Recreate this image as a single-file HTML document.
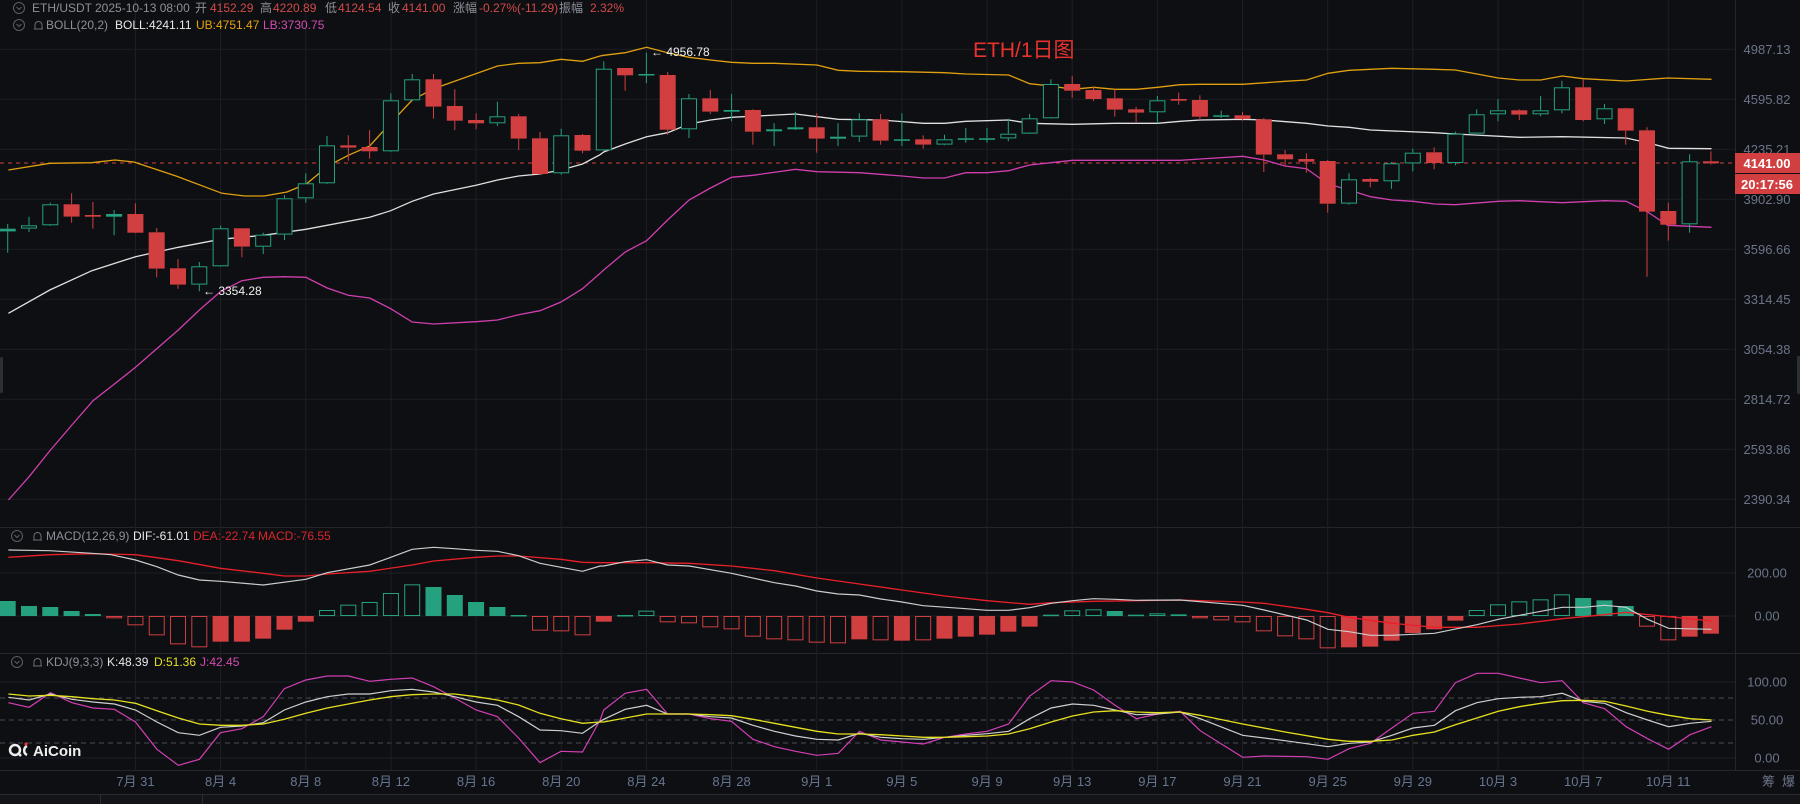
<!DOCTYPE html>
<html><head><meta charset="utf-8">
<style>
html,body{margin:0;padding:0;background:#0e0f12;width:1800px;height:804px;overflow:hidden;}
svg{display:block;font-family:"Liberation Sans","Noto Sans CJK SC",sans-serif;}
</style></head>
<body>
<svg id="c" width="1800" height="804" xmlns="http://www.w3.org/2000/svg">
<rect width="1800" height="804" fill="#0e0f12"/>
<g id="grid"></g>
<g id="ind"></g>
<g id="cand"></g>
<!-- headers -->
<g font-size="12">
  <circle cx="19" cy="8" r="5.5" fill="none" stroke="#5a5e68" stroke-width="1"/>
  <path d="M16.5 7 L19 9.5 L21.5 7" fill="none" stroke="#5a5e68" stroke-width="1"/>
  <text x="32" y="12" fill="#8c909a">ETH/USDT</text>
  <text x="95" y="12" fill="#8c909a">2025-10-13 08:00</text>
  <text x="195" y="12" fill="#8c909a">开</text><text x="210" y="12" fill="#d24a4a">4152.29</text>
  <text x="260" y="12" fill="#8c909a">高</text><text x="273" y="12" fill="#d24a4a">4220.89</text>
  <text x="325" y="12" fill="#8c909a">低</text><text x="338" y="12" fill="#d24a4a">4124.54</text>
  <text x="388" y="12" fill="#8c909a">收</text><text x="402" y="12" fill="#d24a4a">4141.00</text>
  <text x="453" y="12" fill="#8c909a">涨幅</text><text x="479" y="12" fill="#d24a4a">-0.27%(-11.29)</text>
  <text x="559" y="12" fill="#8c909a">振幅</text><text x="590" y="12" fill="#d24a4a">2.32%</text>

  <circle cx="19" cy="25" r="5.5" fill="none" stroke="#5a5e68" stroke-width="1"/>
  <path d="M16.5 24 L19 26.5 L21.5 24" fill="none" stroke="#5a5e68" stroke-width="1"/>
  <path d="M34 29 h9 M35 29 v-4 a3.5 3.5 0 0 1 7 0 v4" fill="none" stroke="#6a6e78" stroke-width="1"/>
  <text x="46" y="29" fill="#8c909a">BOLL(20,2)</text>
  <text x="115" y="29" fill="#e8e8e8">BOLL:4241.11</text>
  <text x="196" y="29" fill="#e6a30e">UB:4751.47</text>
  <text x="263" y="29" fill="#d24cb0">LB:3730.75</text>

  <circle cx="17" cy="536" r="5.5" fill="none" stroke="#5a5e68" stroke-width="1"/>
  <path d="M14.5 535 L17 537.5 L19.5 535" fill="none" stroke="#5a5e68" stroke-width="1"/>
  <path d="M33 540 h9 M34 540 v-4 a3.5 3.5 0 0 1 7 0 v4" fill="none" stroke="#6a6e78" stroke-width="1"/>
  <text x="46" y="540" fill="#8c909a">MACD(12,26,9)</text>
  <text x="133" y="540" fill="#e8e8e8">DIF:-61.01</text>
  <text x="193" y="540" fill="#d9262c">DEA:-22.74</text>
  <text x="258" y="540" fill="#d9262c">MACD:-76.55</text>

  <circle cx="17" cy="662" r="5.5" fill="none" stroke="#5a5e68" stroke-width="1"/>
  <path d="M14.5 661 L17 663.5 L19.5 661" fill="none" stroke="#5a5e68" stroke-width="1"/>
  <path d="M33 666 h9 M34 666 v-4 a3.5 3.5 0 0 1 7 0 v4" fill="none" stroke="#6a6e78" stroke-width="1"/>
  <text x="46" y="666" fill="#8c909a">KDJ(9,3,3)</text>
  <text x="107" y="666" fill="#e8e8e8">K:48.39</text>
  <text x="154" y="666" fill="#e6e020">D:51.36</text>
  <text x="200" y="666" fill="#d24cb0">J:42.45</text>
</g>
<text x="973" y="57" font-size="21" fill="#e8322e">ETH/1日图</text>
<text x="203" y="295" font-size="12" fill="#f0f0f0">← 3354.28</text>
<text x="651" y="56" font-size="12" fill="#f0f0f0">← 4956.78</text>
<!-- AiCoin logo -->
<g>
  <circle cx="15" cy="750" r="5" fill="none" stroke="#eee" stroke-width="2.5"/>
  <path d="M18 753 l3 3" stroke="#eee" stroke-width="2.5"/>
  <path d="M27 746 a5 5 0 0 0 0 9" fill="none" stroke="#eee" stroke-width="2.5"/>
  <circle cx="26" cy="744" r="1.6" fill="#e33"/>
  <text x="33" y="756" font-size="15" font-weight="bold" fill="#eee">AiCoin</text>
</g>
<!-- price tags -->
<rect x="1735" y="153" width="65" height="20" fill="#d13f41"/>
<text x="1767" y="168" font-size="13" font-weight="bold" fill="#fff" text-anchor="middle">4141.00</text>
<rect x="1735" y="174" width="65" height="20" fill="#d13f41"/>
<text x="1767" y="189" font-size="13" font-weight="bold" fill="#fff" text-anchor="middle">20:17:56</text>
<rect x="0" y="357" width="3" height="36" rx="1" fill="#2c2f36"/>
<rect x="1797" y="356" width="3" height="38" rx="1" fill="#2c2f36"/>
<!-- bottom strip -->
<rect x="0" y="794" width="1800" height="10" fill="#131418"/>
<line x1="0" y1="794.5" x2="1800" y2="794.5" stroke="#2a2c32"/>
<line x1="100.5" y1="795" x2="100.5" y2="804" stroke="#2a2c32"/>
<line x1="202.5" y1="795" x2="202.5" y2="804" stroke="#2a2c32"/>
<text x="1762" y="786" font-size="13" fill="#6b7488">筹</text>
<text x="1782" y="786" font-size="13" fill="#6b7488">爆</text>
</svg>
<script>
(function(){
var S=2.613, NS="http://www.w3.org/2000/svg";
var grid=document.getElementById('grid'), ind=document.getElementById('ind'), cand=document.getElementById('cand');
var h='';
function X(i){return 7.7+21.29*i;}
// horizontal grid main
var pl=[["4987.13",49.3],["4595.82",99.3],["4235.21",149.3],["3902.90",199.3],["3596.66",249.3],["3314.45",299.3],["3054.38",349.3],["2814.72",399.3],["2593.86",449.3],["2390.34",499.3]];
pl.forEach(function(p){h+='<line x1="0" y1="'+p[1]+'" x2="1735" y2="'+p[1]+'" stroke="#1d1f25"/>';
 h+='<text x="1767" y="'+(p[1]+4.5)+'" font-size="13" fill="#6b7488" text-anchor="middle">'+p[0]+'</text>';});
// panel separators
[527,653,770].forEach(function(y){h+='<line x1="0" y1="'+(y+.5)+'" x2="1800" y2="'+(y+.5)+'" stroke="#24262c"/>';});
[573,616,682,758].forEach(function(y){h+='<line x1="0" y1="'+y+'" x2="1735" y2="'+y+'" stroke="#1d1f25"/>';});
[["200.00",573],["0.00",616],["100.00",682],["50.00",720],["0.00",758]].forEach(function(p){
 h+='<text x="1767" y="'+(p[1]+4.5)+'" font-size="13" fill="#6b7488" text-anchor="middle">'+p[0]+'</text>';});
[698,720,743].forEach(function(y){h+='<line x1="0" y1="'+y+'" x2="1735" y2="'+y+'" stroke="#4a4d55" stroke-dasharray="5,4"/>';});
// vertical grid + time labels
var tl=["7月 31","8月 4","8月 8","8月 12","8月 16","8月 20","8月 24","8月 28","9月 1","9月 5","9月 9","9月 13","9月 17","9月 21","9月 25","9月 29","10月 3","10月 7","10月 11"];
for(var k=0;k<tl.length;k++){var x=X(6+4*k);
 h+='<line x1="'+x+'" y1="0" x2="'+x+'" y2="770" stroke="#1d1f25"/>';
 h+='<text x="'+x+'" y="786" font-size="13" fill="#667591" text-anchor="middle">'+tl[k]+'</text>';}
h+='<line x1="1735.5" y1="0" x2="1735.5" y2="770" stroke="#24262c"/>';
// dashed price line
h+='<line x1="0" y1="163" x2="1735" y2="163" stroke="#d13f41" stroke-dasharray="4,4"/>';
grid.innerHTML=h;

function seg(x0,y0,a,out){for(var k=0;k<a.length;k+=2){var x=x0+a[k]/S,y=y0+a[k+1]/3;
 if(out.length&&x<=out[out.length-1][0]+0.5)continue;out.push([x,y]);}return out;}
function line(pts,c,w){return '<polyline fill="none" stroke="'+c+'" stroke-width="'+(w||1.2)+'" points="'+pts.map(function(p){return p[0].toFixed(1)+','+p[1].toFixed(1);}).join(' ')+'"/>';}
var g='';
// BOLL
var up=[];seg(0,40,[22,390,130,370,240,368,300,360,350,366,460,408,580,460,640,468,690,468,750,456,800,432,860,376,910,346,966,318,1020,250,1077,180,1133,146,1188,124,1300,78,1355,70,1411,68,1466,58,1522,64,1568,48],up);
seg(580,40,[0,64,62,46,118,38,174,22,229,38,285,52,341,60,396,67,452,70,508,70,619,75,675,91,730,94,841,95,953,98,1008,102,1120,105,1175,131,1231,138,1287,148,1342,142,1398,148,1454,148,1509,142,1568,134],up);
seg(1160,40,[0,142,105,133,216,133,327,124,383,120,439,100,494,91,606,85,717,88,772,90,828,102,884,114,939,120,995,120,1051,108,1106,116,1218,123,1327,114,1441,118],up);
var mid=[];seg(0,40,[22,820,130,750,240,692,354,650,466,622,576,598,688,586,799,568,966,532,1021,512,1077,484,1133,462,1244,436,1300,420,1355,408,1411,402,1466,390,1522,372,1568,344],mid);
seg(580,40,[0,372,62,336,118,312,174,290,229,278,285,252,341,240,396,232,563,222,675,238,786,240,897,250,953,250,1008,244,1120,240,1175,250,1287,253,1398,250,1509,250,1568,244],mid);
seg(1160,40,[0,250,105,240,216,238,272,240,383,250,439,258,494,262,550,270,717,278,772,282,939,292,1051,290,1218,294,1274,308,1329,325,1441,326],mid);
var lo=[];seg(0,40,[22,1380,76,1310,132,1230,188,1155,243,1082,299,1032,354,982,466,870,521,810,576,755,632,722,688,712,743,710,799,712,855,744,910,766,966,774,1021,806,1077,846,1133,852,1244,845,1300,840,1355,824,1411,812,1466,786,1522,746,1568,700],lo);
seg(580,40,[0,746,62,690,118,636,174,602,229,540,285,480,341,444,396,412,452,406,563,388,619,395,730,398,841,408,897,414,953,414,1008,398,1064,398,1120,392,1175,375,1231,368,1287,361,1568,361],lo);
seg(1160,40,[0,360,105,357,216,349,272,360,327,378,383,386,439,432,494,450,550,470,606,480,661,484,717,492,772,494,884,484,939,482,1051,488,1162,482,1218,484,1274,516,1327,556,1441,562],lo);
g+=line(up,'#e0a010',1.3)+line(mid,'#e0e0e0',1.3)+line(lo,'#d03fb0',1.3);

// MACD hist
var hz=[[243,0],[258,0],[261,0],[273,0],[282,0],[295,1],[316,1],[346,1],[373,1],[382,1],[365,0],[365,0],[356,0],[329,0],[305,0],[270,1],[254,1],[246,1],[219,1],[193,1],[201,0],[225,0],[246,0],[261,0],[285,0],[332,1],[334,1],[346,1],[305,0],[285,0],[272,1],[307,1],[310,1],[322,1],[328,1],[350,1],[358,1],[361,1],[368,1],[370,1],[358,0],[361,1],[362,0],[361,1],[356,0],[350,0],[344,0],[335,0],[320,0],[284,0],[271,1],[268,1],[273,0],[284,0],[280,1],[283,0],[295,1],[301,1],[307,1],[334,1],[349,1],[358,1],[385,1],[382,0],[380,0],[362,0],[339,0],[328,0],[302,0],[270,1],[253,1],[244,1],[238,1],[223,1],[234,0],[241,0],[258,0],[320,1],[361,1],[350,0],[341,0]];
var zero=616;
hz.forEach(function(b,i){var y=520+b[0]/3,x=X(i)-8,c=b[0]<288?'#26a17f':'#d13f41';
 var t=Math.min(y,zero),hh=Math.max(Math.abs(y-zero),1.5);
 if(b[1]&&hh>2)g+='<rect x="'+(x+.5)+'" y="'+(t+.5)+'" width="15" height="'+(hh-1)+'" fill="none" stroke="'+c+'" stroke-width="1"/>';
 else g+='<rect x="'+x+'" y="'+t+'" width="16" height="'+hh+'" fill="'+c+'"/>';});
var dif=[];seg(0,520,[22,90,130,92,240,100,290,104,354,120,410,140,466,165,521,180,576,184,688,195,799,178,855,158,966,135,1021,112,1077,88,1133,82,1188,86,1244,91,1300,94,1355,107,1411,130,1466,142,1522,154,1568,138],dif);
seg(580,520,[0,154,62,138,118,125,174,119,229,135,285,138,396,160,508,188,563,198,619,213,675,222,730,225,786,237,841,246,897,257,1008,266,1064,271,1120,271,1175,263,1231,250,1287,242,1342,236,1398,238,1454,241,1568,240],dif);
seg(1160,520,[0,240,50,240,216,256,272,270,383,300,439,328,494,335,550,346,606,346,717,340,828,314,884,298,939,286,1051,262,1106,262,1162,256,1218,262,1274,298,1329,325,1441,328],dif);
var dea=[];seg(0,520,[22,112,130,104,240,101,354,104,466,122,576,145,688,160,743,168,799,168,855,162,966,154,1077,135,1133,123,1244,112,1300,108,1355,108,1466,118,1522,127,1568,128],dea);
seg(580,520,[0,127,174,128,285,130,396,138,508,152,619,174,730,192,841,210,953,228,1064,242,1175,253,1231,248,1342,244,1454,242,1568,240],dea);
seg(1160,520,[0,240,216,246,272,250,383,268,439,278,494,292,606,310,717,322,828,322,939,312,1051,296,1162,284,1218,277,1329,290,1441,303],dea);
g+=line(dea,'#e8202a',1.3)+line(dif,'#cccccc',1.2);
// KDJ
var K=[];seg(0,520,[22,532,76,540,132,522,188,538,243,546,299,552,354,570,410,606,466,638,521,646,576,622,632,618,688,608,743,570,799,546,855,530,910,522,966,522,1021,512,1077,508,1133,516,1188,530,1244,546,1300,556,1355,590,1411,630,1466,632,1522,640,1568,604],K);
seg(580,520,[0,640,62,598,118,568,174,556,229,582,285,582,341,590,396,594,452,616,508,634,563,648,619,658,675,660,730,640,786,652,841,656,897,658,953,652,1008,646,1064,641,1120,634,1175,596,1231,564,1287,552,1342,556,1398,570,1454,584,1509,582,1568,576],K);
seg(1160,520,[0,578,49,576,105,596,216,646,327,662,439,680,494,670,550,666,606,646,661,624,717,616,772,572,828,548,884,536,939,532,995,530,1051,520,1106,544,1162,550,1218,578,1274,600,1329,620,1385,610,1441,604],K);
var D=[];seg(0,520,[22,522,76,528,132,526,188,530,243,536,299,540,354,550,410,572,466,594,521,612,576,616,632,616,688,612,743,598,799,580,855,564,910,552,966,540,1021,530,1077,524,1133,522,1188,522,1244,530,1300,540,1355,555,1411,580,1466,596,1522,610,1568,606],D);
seg(580,520,[0,612,62,606,118,594,174,582,229,582,285,582,341,584,396,587,452,598,508,610,563,622,619,634,675,642,730,642,786,644,841,648,897,652,953,652,1008,650,1064,648,1120,642,1175,626,1231,606,1287,588,1342,576,1398,572,1454,576,1509,578,1568,576],D);
seg(1160,520,[0,578,49,576,105,586,216,612,327,636,439,658,494,664,550,664,606,660,661,646,717,636,772,614,828,594,884,574,939,560,995,550,1051,542,1106,541,1162,544,1218,558,1274,574,1329,586,1385,596,1441,600],D);
var J=[];seg(0,520,[22,548,76,562,132,518,188,548,243,564,299,568,354,606,410,688,466,736,521,718,576,638,632,626,688,590,743,506,799,480,855,468,910,468,966,484,1021,478,1077,474,1133,500,1188,534,1244,570,1300,590,1355,654,1411,728,1466,694,1522,696,1568,600],J);
seg(580,520,[0,698,62,570,118,520,174,508,229,582,285,582,341,596,396,604,452,658,508,680,563,694,619,706,675,700,730,634,786,660,841,666,897,672,953,652,1008,642,1064,634,1120,612,1175,528,1231,482,1287,486,1342,510,1398,556,1454,596,1509,582,1568,574],J);
seg(1160,520,[0,578,49,574,105,632,216,712,272,708,383,710,439,718,494,686,550,670,606,624,661,580,717,574,772,488,828,460,884,460,995,488,1051,482,1106,548,1162,566,1218,620,1274,656,1329,688,1385,644,1441,620],J);
g+=line(J,'#d23fb5',1.2)+line(K,'#cfcfcf',1.2)+line(D,'#e6e020',1.3);
ind.innerHTML=g;

// candles: [color, bodyTop, bodyBot, wickTop, wickBot] zoom y (y = 40 + z/3)
var C=[['g',566,574,552,638],['g',556,566,530,576],['g',493,556,488,558],['r',493,530,460,548],['r',525,530,486,566],['g',522,530,510,586],['r',522,578,490,580],['r',577,686,564,712],['r',685,734,658,746],['g',679,734,666,754],
['g',565,679,557,680],['r',565,620,565,652],['g',584,620,578,642],['g',475,584,465,600],['g',430,475,400,488],['g',316,430,288,432],['r',316,323,286,362],['r',321,334,270,356],['g',181,334,160,336],['g',118,181,102,184],
['r',118,200,102,236],['r',198,242,148,270],['r',240,250,220,268],['g',229,250,185,258],['r',229,296,222,330],['r',295,402,276,404],['g',286,400,266,404],['r',285,332,282,340],['g',86,331,64,333],['r',84,106,84,152],
['g',102,106,38,130],['r',105,269,96,284],['g',175,268,162,294],['r',175,215,150,222],['g',210,215,162,244],['r',210,275,208,314],['g',268,274,250,318],['g',262,268,216,270],['r',262,296,220,338],['g',290,296,250,318],
['g',238,290,220,306],['r',238,302,222,314],['g',298,302,220,318],['r',298,314,286,326],['g',298,314,284,316],['g',295,299,264,308],['g',295,299,264,308],['g',281,295,236,304],['g',235,281,222,282],['g',132,235,118,236],
['r',132,152,108,174],['r',150,177,140,184],['r',175,209,148,230],['r',208,218,200,246],['g',181,217,168,250],['r',177,182,158,194],['r',180,230,166,240],['g',226,230,212,234],['r',226,237,216,242],['r',238,344,234,396],
['r',343,358,330,378],['r',357,365,340,398],['r',363,491,360,518],['g',418,491,400,494],['r',417,425,414,442],['g',370,424,366,446],['g',338,370,326,394],['r',337,369,322,388],['g',281,369,275,376],['g',223,281,208,285],
['g',211,223,178,244],['r',211,224,208,240],['g',211,223,168,229],['g',142,211,122,220],['r',142,240,118,244],['g',205,238,192,252],['r',205,272,203,314],['r',271,515,262,710],['r',513,554,488,602],['g',364,553,343,578],['r',364,370,334,374]];
var s='';
C.forEach(function(c,i){var x=X(i),col=c[0]=='g'?'#26a17f':'#d13f41';
 var bt=40+c[1]/3,bb=40+c[2]/3,wt=40+c[3]/3,wb=40+c[4]/3,bh=Math.max(bb-bt,1.5);
 s+='<line x1="'+x.toFixed(1)+'" y1="'+wt.toFixed(1)+'" x2="'+x.toFixed(1)+'" y2="'+bt.toFixed(1)+'" stroke="'+col+'"/>';
 s+='<line x1="'+x.toFixed(1)+'" y1="'+(bt+bh).toFixed(1)+'" x2="'+x.toFixed(1)+'" y2="'+wb.toFixed(1)+'" stroke="'+col+'"/>';
 if(c[0]=='g'&&bh>3)s+='<rect x="'+(x-7.5).toFixed(1)+'" y="'+(bt+.5).toFixed(1)+'" width="15" height="'+(bh-1).toFixed(1)+'" fill="#0e0f12" stroke="'+col+'" stroke-width="1"/>';
 else s+='<rect x="'+(x-8).toFixed(1)+'" y="'+bt.toFixed(1)+'" width="16" height="'+bh.toFixed(1)+'" fill="'+col+'"/>';});
cand.innerHTML=s;
})();
</script>
</body></html>
